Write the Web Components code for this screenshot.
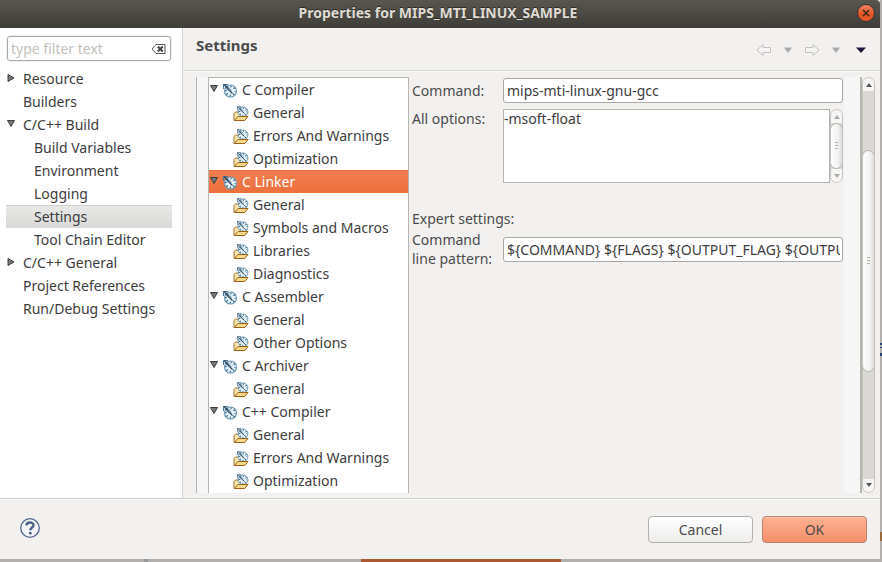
<!DOCTYPE html>
<html lang="en">
<head>
<meta charset="utf-8">
<title>Properties for MIPS_MTI_LINUX_SAMPLE</title>
<style>
html, body { height: 100%; }
body {
  margin: 0; box-sizing: border-box; padding: 0 2px 3px 0; overflow: hidden;
  font: 14px/23px "Noto Sans", "Open Sans", sans-serif; color: #3c3c3c;
  background:
    linear-gradient(#999, #999) 144px 100% / 4px 3px no-repeat,
    linear-gradient(#ad5833, #ad5833) 361px 100% / 200px 3px no-repeat,
    linear-gradient(#24466f, #24466f) 100% 343px / 2px 2px no-repeat,
    linear-gradient(#24466f, #24466f) 100% 347px / 2px 1px no-repeat,
    linear-gradient(#24466f, #24466f) 100% 353px / 2px 3px no-repeat,
    linear-gradient(#9a6a3a, #9a6a3a) 100% 532px / 2px 9px no-repeat,
    #b1b0af;
}
</style>
</head>
<body>
<properties-dialog>
  <title-bar slot="title">Properties for MIPS_MTI_LINUX_SAMPLE</title-bar>
  <category-panel slot="side">
    <tree-item state="closed">Resource</tree-item>
    <tree-item>Builders</tree-item>
    <tree-item state="open">C/C++ Build</tree-item>
    <tree-item level="2">Build Variables</tree-item>
    <tree-item level="2">Environment</tree-item>
    <tree-item level="2">Logging</tree-item>
    <tree-item level="2" selected>Settings</tree-item>
    <tree-item level="2">Tool Chain Editor</tree-item>
    <tree-item state="closed">C/C++ General</tree-item>
    <tree-item>Project References</tree-item>
    <tree-item>Run/Debug Settings</tree-item>
  </category-panel>
  <page-header slot="header">Settings</page-header>
  <settings-page slot="page">
    <tool-tree slot="tree">
      <tree-item icon="tool" state="open">C Compiler</tree-item>
      <tree-item icon="folder">General</tree-item>
      <tree-item icon="folder">Errors And Warnings</tree-item>
      <tree-item icon="folder">Optimization</tree-item>
      <tree-item icon="tool" state="open" selected>C Linker</tree-item>
      <tree-item icon="folder">General</tree-item>
      <tree-item icon="folder">Symbols and Macros</tree-item>
      <tree-item icon="folder">Libraries</tree-item>
      <tree-item icon="folder">Diagnostics</tree-item>
      <tree-item icon="tool" state="open">C Assembler</tree-item>
      <tree-item icon="folder">General</tree-item>
      <tree-item icon="folder">Other Options</tree-item>
      <tree-item icon="tool" state="open">C Archiver</tree-item>
      <tree-item icon="folder">General</tree-item>
      <tree-item icon="tool" state="open">C++ Compiler</tree-item>
      <tree-item icon="folder">General</tree-item>
      <tree-item icon="folder">Errors And Warnings</tree-item>
      <tree-item icon="folder">Optimization</tree-item>
    </tool-tree>
    <command-form slot="form"></command-form>
  </settings-page>
  <dialog-footer slot="footer"></dialog-footer>
</properties-dialog>

<script>
const define = (name, html, setup) => {
  const template = document.createElement('template');
  template.innerHTML = html;
  customElements.define(name, class extends HTMLElement {
    constructor() {
      super();
      this.attachShadow({ mode: 'open' }).append(template.content.cloneNode(true));
    }
    connectedCallback() { if (setup) setup(this, this.shadowRoot); }
  });
};

define('properties-dialog', `
<style>
:host { display: flex; flex-direction: column; height: 100%; background: #f2f1f0; }
.middle { flex: 1; min-height: 0; display: grid; grid-template-columns: 183px minmax(0, 1fr); }
main { display: flex; flex-direction: column; min-height: 0; }
</style>
<slot name="title"></slot>
<div class="middle">
  <slot name="side"></slot>
  <main><slot name="header"></slot><slot name="page"></slot></main>
</div>
<slot name="footer"></slot>`);

define('title-bar', `
<style>
:host { display: grid; grid-template-columns: 32px 1fr 32px; align-items: center; height: 28px;
  background: linear-gradient(#59564f, #3e3d38); color: #dfdbd2; border-top-right-radius: 4px; }
h1 { grid-column: 2; margin: 0; padding: 0 4px 2px 0; text-align: center; font: bold 14px/24px "Noto Sans", sans-serif; text-shadow: 0 -1px #2c2b28; }
button { width: 18px; height: 18px; padding: 0; margin: 0 0 2px 9px; border: 1px solid #35332e; border-radius: 50%;
  background: linear-gradient(#f58261, #e05325 60%, #e95b2a); display: grid; place-items: center; }
</style>
<h1><slot></slot></h1>
<button aria-label="Close"><svg width="8" height="8" viewBox="0 0 8 8"><path d="M1 1l6 6m0-6l-6 6" stroke="#3b2a1e" stroke-width="1.5"/></svg></button>`);

define('category-panel', `
<style>
:host { display: flex; flex-direction: column; background: #fff; border-right: 1px solid #d5d3d0; padding: 8px 10px 0 6px; }
label { display: flex; align-items: center; height: 23px; margin: 0 1px; padding: 0 4px 0 3px;
  border: 1px solid #aba7a2; border-radius: 3px; box-shadow: 0 0 0 1px #f2f1f0; }
input { flex: 1; min-width: 0; border: 0; padding: 0; background: none; outline: 0; font: inherit; color: inherit; }
input::placeholder { color: #c5bfba; opacity: 1; }
button { border: 0; padding: 0; background: none; display: flex; }
nav { margin-top: 6px; }
</style>
<label>
  <input type="text" placeholder="type filter text" aria-label="Filter">
  <button aria-label="Clear filter"><svg width="15" height="12" viewBox="0 0 15 12"><path d="M5 1.500h9v9H5L1 6z" fill="#fff" stroke="#555"/><path d="M6.800 3.500l5 5m0-5l-5 5" stroke="#444" stroke-width="2"/></svg></button>
</label>
<nav><slot></slot></nav>`);

const GAUGE = `
<circle cx="8.500" cy="8" r="6" fill="#eaf5fa" stroke="#6d9ab5" stroke-width="1.200"/>
<circle cx="8.500" cy="8" r="4.500" fill="none" stroke="#1f5579" stroke-width="1.800" stroke-dasharray="1 2.534" stroke-dashoffset=".5"/>
<path d="M1.500 1v5M2 1.500h4" stroke="#4b7898" stroke-width="1"/>
<path d="M2 1.500L10.500 10.500" stroke="#24435d" stroke-width="1.100"/>
<path d="M2.500 4L9 9.500M4.500 2L9.500 7.500" stroke="#5c7c94" stroke-width=".8"/>`;

const ICONS = {
  tool: `<svg width="16" height="16" viewBox="0 0 16 16">${GAUGE}</svg>`,
  folder: `<svg width="16" height="16" viewBox="0 0 16 16">
    <path d="M1 14.500V7.500L2.500 6H5L6.500 8H13v3" fill="#f8e3ae" stroke="#a87532"/>
    <g transform="translate(3.300 -.6) scale(.8)">${GAUGE}</g>
    <path d="M1.300 14.500L5 10.500h10L11.800 14.500z" fill="#fbd98a" stroke="#9a6218"/></svg>`
};

define('tree-item', `
<style>
:host { display: block; }
button { display: flex; align-items: center; width: 100%; height: 23px; padding: 0 0 0 1px; border: 0;
  background: none; font: inherit; color: inherit; text-align: left; white-space: nowrap; }
.arrow { width: 16px; height: 10px; flex: none; display: flex; margin-bottom: 2px; }
:host([level="2"]) button { padding-left: 12px; }
:host([selected]) button { background: linear-gradient(#e9e9e7, #d9d9d7); box-shadow: inset 0 1px #d0cfcc; }
.icon { display: none; flex: none; width: 16px; height: 16px; }
:host([icon]) .arrow { width: 12px; }
:host([icon]) .icon { display: block; margin-right: 4px; }
:host([icon="folder"]) button { padding-left: 12px; }
:host([icon][selected]) button { background: linear-gradient(#f47f50, #ec6f3c); box-shadow: inset 0 1px #e8683a; color: #fff; }
</style>
<button><span class="arrow"></span><span class="icon"></span><span><slot></slot></span></button>`,
(host, root) => {
  const state = host.getAttribute('state');
  const shape = state === 'open' ? 'M.5 1.500h7L4 7.500z' : 'M1 1.500v7l6-3.500z';
  if (state) root.querySelector('.arrow').innerHTML =
    `<svg width="8" height="10" viewBox="0 0 8 10"><path d="${shape}" fill="#777" stroke="#3c3c3c"/></svg>`;
  const icon = ICONS[host.getAttribute('icon')];
  if (icon) root.querySelector('.icon').innerHTML = icon;
});

define('page-header', `
<style>
:host { display: flex; justify-content: space-between; align-items: center; height: 42px; flex: none;
  padding: 0 14px 0 13px; border-bottom: 1px solid #d6d4d1; box-shadow: 0 1px #fbfafa; }
h2 { margin: 0 0 8px; font: bold 15px/20px "Noto Sans", sans-serif; color: #4c4c4c; }
div { display: flex; align-items: center; gap: 12px; margin-top: 2px; }
button { border: 0; padding: 0; background: none; display: flex; }
button:last-child { margin-left: 4px; }
</style>
<h2><slot></slot></h2>
<div>
  <button aria-label="Back"><svg width="16" height="14" viewBox="0 0 16 14"><path d="M1 7l6-5.500v3h7.500v5H7v3z" fill="#f5f4f3" stroke="#c4c2c0"/></svg></button>
  <button aria-label="Back history"><svg width="8" height="6" viewBox="0 0 8 6"><path d="M0 .5h8L4 6z" fill="#aaa"/></svg></button>
  <button aria-label="Forward"><svg width="16" height="14" viewBox="0 0 16 14"><path d="M15 7L9 1.500v3H1.500v5H9v3z" fill="#f5f4f3" stroke="#c4c2c0"/></svg></button>
  <button aria-label="Forward history"><svg width="8" height="6" viewBox="0 0 8 6"><path d="M0 .5h8L4 6z" fill="#aaa"/></svg></button>
  <button aria-label="View menu"><svg width="10" height="6" viewBox="0 0 10 6"><path d="M0 .5h10L5 6z" fill="#23173b"/></svg></button>
</div>`);

define('scroll-bar', `
<style>
:host { display: flex; flex-direction: column; width: 11px; flex: none; border: 1px solid #c6c3bf; border-radius: 7px;
  overflow: hidden; background: #dbd9d6; box-sizing: content-box; }
button { height: 13px; flex: none; padding: 0; border: 0; background: #f7f6f5; display: grid; place-items: center; color: #555; }
:host([muted]) button { color: #aaa; }
.before { flex: var(--before, 0) 0 0; }
.after { flex: var(--after, 0) 0 0; }
.thumb { flex: var(--thumb, 1) 0 0; border: 1px solid #b5b2ad; margin: 0 -1px; border-radius: 7px; display: grid; place-items: center;
  background: linear-gradient(90deg, #fdfdfd, #f4f3f2 60%, #dedcda); }
</style>
<button aria-label="Scroll up"><svg width="6" height="4" viewBox="0 0 6 4"><path d="M0 4L3 0l3 4z" fill="currentColor"/></svg></button>
<div class="before"></div>
<div class="thumb"><svg width="3" height="8" viewBox="0 0 3 8"><path d="M0 .5h3M0 3.500h3M0 6.500h3" stroke="#b5b2ad"/></svg></div>
<div class="after"></div>
<button aria-label="Scroll down"><svg width="6" height="4" viewBox="0 0 6 4"><path d="M0 0h6L3 4z" fill="currentColor"/></svg></button>`);

define('settings-page', `
<style>
:host { flex: 1; min-height: 0; display: grid; grid-template: minmax(0, 1fr) / 201px minmax(0, 1fr) 13px;
  margin: 6px 5px 5px 13px; padding-left: 11px; border-left: 1px solid #b8b4af; background: #f6f6f6; }
.form { background: #f2f1f0; margin-right: 18px; }
.bar { display: flex; box-shadow: -2px 0 #b8b4af; background: #f2f1f0; }
scroll-bar { --before: 59; --thumb: 221; --after: 107; }
</style>
<slot name="tree"></slot>
<div class="form"><slot name="form"></slot></div>
<div class="bar"><scroll-bar></scroll-bar></div>`);

define('tool-tree', `
<style>
:host { display: block; overflow: hidden; border: 1px solid #b8b4af; border-bottom: 0; background: #fff; }
</style>
<slot></slot>`);

define('command-form', `
<style>
:host { display: block; color: #4c4c4c; }
form { display: grid; grid-template-columns: 91px minmax(0, 1fr); align-items: start; padding: 1px 1px 0 3px; row-gap: 6px; }
input { width: 100%; height: 25px; box-sizing: border-box; padding: 0 2px 0 3px; border: 1px solid #aba7a2; border-radius: 3px;
  font: inherit; color: #3c3c3c; background: #fff; outline: 0; }
.area { display: flex; height: 74px; }
textarea { flex: 1; min-width: 0; resize: none; box-sizing: border-box; overflow: hidden; border: 1px solid #b8b4af; padding: 0;
  font: inherit; line-height: 18px; color: #3c3c3c; background: #fff; outline: 0; }
label { line-height: 25px; }
label[for="options"] { line-height: 19px; }
label[for="pattern"] { line-height: 19px; }
h3 { grid-column: 1 / -1; margin: 18px 0 -6px; font: inherit; line-height: 23px; }
.pattern { grid-column: 1 / -1; display: grid; grid-template-columns: subgrid; align-items: center; }
</style>
<form>
  <label for="command">Command:</label>
  <input id="command" type="text" value="mips-mti-linux-gnu-gcc">
  <label for="options">All options:</label>
  <div class="area"><textarea id="options">-msoft-float</textarea><scroll-bar muted></scroll-bar></div>
  <h3>Expert settings:</h3>
  <div class="pattern">
    <label for="pattern">Command<br>line pattern:</label>
    <input id="pattern" type="text" value="\${COMMAND} \${FLAGS} \${OUTPUT_FLAG} \${OUTPUT_PREFIX}\${OUTPUT} \${INPUTS}">
  </div>
</form>`);

define('dialog-footer', `
<style>
:host { display: flex; align-items: center; gap: 9px; height: 60px; flex: none; padding: 0 13px 0 20px;
  border-top: 1px solid #d0cecb; box-shadow: inset 0 1px #fafafa; }
button { width: 105px; height: 27px; padding: 0; border: 1px solid #b3afaa; border-radius: 4px; font: inherit; color: #4c4c4c;
  background: linear-gradient(#fff, #eeedec); }
.ok { border-color: #b9806a; background: linear-gradient(#ffb193, #f4906a); box-shadow: inset 0 1px #ffc4ac; }
.help { width: 20px; height: 20px; margin: 0 auto 2px 0; border: 0; background: none; display: flex; }
</style>
<button class="help" aria-label="Help"><svg width="20" height="20" viewBox="0 0 20 20"><circle cx="10" cy="10" r="9.300" fill="#f4f4f6" stroke="#556a8e" stroke-width="1.300"/><path d="M6.500 7.500C6.500 3.500 13.500 3.500 13.500 7.200C13.500 9.600 10.300 9.300 10.300 12.300" fill="none" stroke="#4d6288" stroke-width="2.400"/><circle cx="10.300" cy="15.200" r="1.400" fill="#4d6288"/></svg></button>
<button>Cancel</button>
<button class="ok">OK</button>`);
</script>
</body>
</html>
